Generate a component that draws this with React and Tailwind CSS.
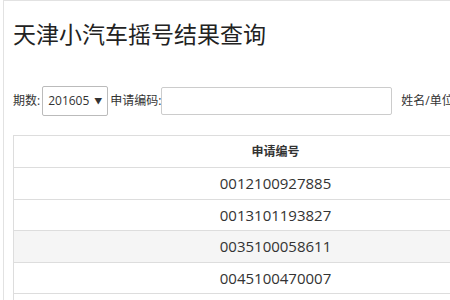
import React from 'react';

const rows = [
  '0012100927885',
  '0013101193827',
  '0035100058611',
  '0045100470007',
  '0046100512345',
];

const App = () => {
  return (
    <div
      className="w-[450px] h-[300px] overflow-hidden bg-white"
      style={{ fontFamily: '"Open Sans", "Noto Sans CJK SC", sans-serif' }}
    >
      <div className="ml-[3px] w-[600px] h-[300px] border-l border-t border-[#e2e2e2] pl-[9px]">
        <h1 className="pt-[18px] text-[23px] leading-[30px] text-[#222]">
          天津小汽车摇号结果查询
        </h1>

        <div className="mt-[37px] flex items-center h-[30px] text-[12px] text-[#333]">
          <span>期数:</span>
          <div className="ml-[2px] w-[66px] h-[30px] border border-[#bbb] rounded-[2px] flex items-center justify-between pl-[5px] pr-[5px]">
            <span className="text-[12px]">201605</span>
            <span className="text-[8px]">▼</span>
          </div>
          <span className="ml-[2px]">申请编码:</span>
          <div className="w-[231px] h-[28px] border border-[#ccc] rounded-[2px]" />
          <span className="ml-[9px]">姓名/单位</span>
        </div>

        <div className="mt-[19px] w-[524px] border-l border-t border-[#ddd]">
          <div className="h-[32px] flex items-center justify-center border-b border-[#ddd] text-[12px] font-bold text-[#333]">
            申请编号
          </div>
          {rows.map((r, i) => (
            <div
              key={r}
              className={`h-[31.5px] flex items-center justify-center border-b border-[#ddd] text-[15px] text-[#333] ${
                i === 2 ? 'bg-[#f5f5f5]' : 'bg-white'
              }`}
            >
              {r}
            </div>
          ))}
        </div>
      </div>
    </div>
  );
};

export default App;
